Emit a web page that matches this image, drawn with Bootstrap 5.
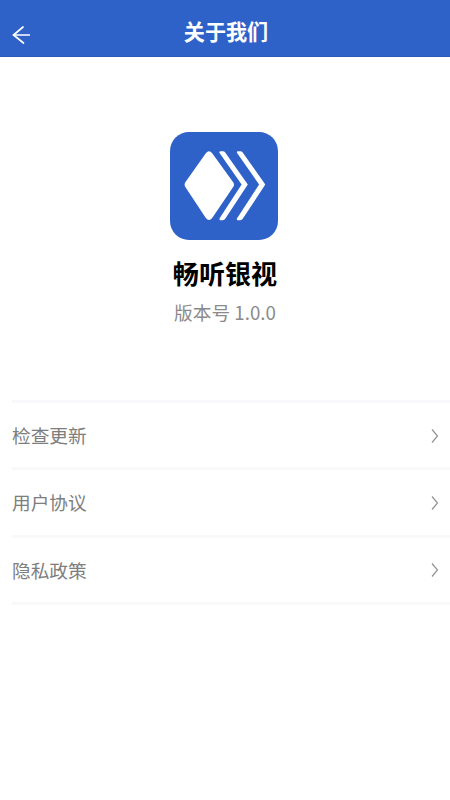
<!DOCTYPE html>
<html lang="zh-CN">
<head>
<meta charset="utf-8">
<meta name="viewport" content="width=device-width, initial-scale=1">
<title>关于我们</title>
<link href="https://cdn.jsdelivr.net/npm/bootstrap@5.3.0/dist/css/bootstrap.min.css" rel="stylesheet">
<style>
body { font-family: "Noto Sans CJK SC", sans-serif; min-height: 100vh; overflow: hidden; }
.app-bar { background: #2e62c8; height: 57px; padding: 5px 0 0 12px; border-bottom: 1px solid #2a5bbb; }
.app-bar h1 { font-size: 21.1px; line-height: 32px; padding-right: 30px; }
.back-btn { width: 20px; height: 20px; margin-top: 8px; }
.brand { padding-top: 75px; height: 343px; }
.logo { width: 108px; height: 108px; margin-right: 2px; }
.brand h2 { font-size: 26.1px; line-height: 36px; margin-top: 15px; }
.version { font-size: 18.7px; line-height: 28px; color: #8b8b8b; margin-top: 7px; }
.menu { margin-left: 12px; border-top: 3px solid #f9f9fc; }
.menu-row { height: 67.3px; border-bottom: 3px solid #f9f9fa; font-size: 18.7px; color: #7e7e7e; padding-right: 10px; }
.menu-row:hover { color: #7e7e7e; }
.menu-row svg { margin-top: 1px; }
</style>
</head>
<body class="bg-white">
<header class="app-bar d-flex align-items-center text-white">
  <a href="#" class="back-btn d-flex text-white" aria-label="返回">
    <svg width="20" height="20" viewBox="0 0 20 20" fill="none" stroke="currentColor" stroke-linecap="round"><path d="M11 2 1.5 10 11.5 18" stroke-width="1.7"/><path d="M1.5 10H17.5" stroke-width="1.3"/></svg>
  </a>
  <h1 class="flex-fill text-center fw-bold mb-0">关于我们</h1>
</header>
<main>
  <section class="brand d-flex flex-column align-items-center">
    <svg class="logo" viewBox="0 0 108 108">
      <rect width="108" height="108" rx="19" fill="#2e62c8"/>
      <path d="M36 21Q39 17.5 42 21L63 50Q65 52.5 63 55.3L42.2 86Q39 90 35.8 86L15.5 55.3Q13.7 52.5 15.5 50Z" fill="#fff"/>
      <path d="M50.3 19.2H53Q54.3 19.2 55.2 20.4L77.8 52.5 55.4 86.6Q54.4 88.3 52.7 88.3H50.3Q48.8 88 49.6 86.3L71.6 52.5 49.4 20.7Q49 19.4 50.3 19.2Z" fill="#fff"/>
      <path d="M67.8 19.2H70.5Q71.8 19.2 72.7 20.4L95.3 52.5 72.9 86.6Q71.9 88.3 70.2 88.3H67.8Q66.3 88 67.1 86.3L89.1 52.5 66.9 20.7Q66.5 19.4 67.8 19.2Z" fill="#fff"/>
    </svg>
    <h2 class="fw-bold text-black mb-0">畅听银视</h2>
    <p class="version mb-0">版本号 1.0.0</p>
  </section>
  <nav class="menu">
    <a href="#" class="menu-row d-flex align-items-center justify-content-between text-decoration-none"><span>检查更新</span><svg width="10" height="16" viewBox="0 0 10 16" fill="none" stroke="#929292" stroke-width="1.2"><path d="M2 1.5 7.5 8 2 14.5"/></svg></a>
    <a href="#" class="menu-row d-flex align-items-center justify-content-between text-decoration-none"><span>用户协议</span><svg width="10" height="16" viewBox="0 0 10 16" fill="none" stroke="#929292" stroke-width="1.2"><path d="M2 1.5 7.5 8 2 14.5"/></svg></a>
    <a href="#" class="menu-row d-flex align-items-center justify-content-between text-decoration-none"><span>隐私政策</span><svg width="10" height="16" viewBox="0 0 10 16" fill="none" stroke="#929292" stroke-width="1.2"><path d="M2 1.5 7.5 8 2 14.5"/></svg></a>
  </nav>
</main>
<script src="https://cdn.jsdelivr.net/npm/bootstrap@5.3.0/dist/js/bootstrap.bundle.min.js"></script>
</body>
</html>
